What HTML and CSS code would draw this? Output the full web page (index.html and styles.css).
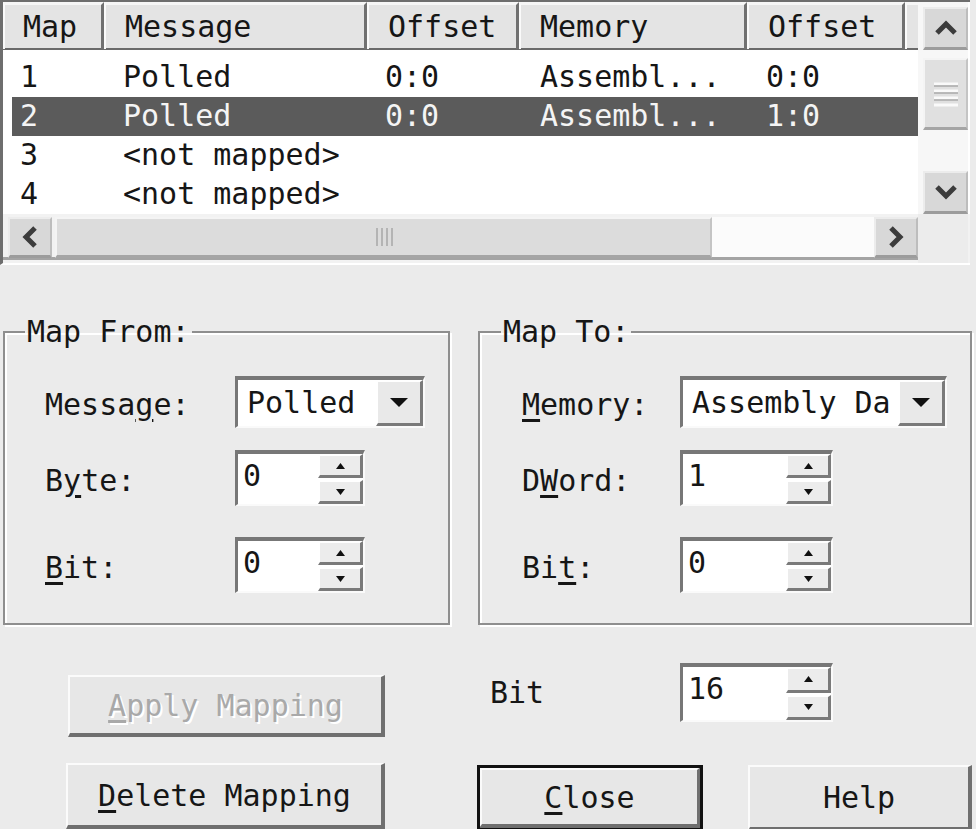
FILE: index.html
```
<!DOCTYPE html>
<html lang="en">
<head>
  <meta charset="UTF-8">
  <title>Map Assembly Data</title>
  <link rel="stylesheet" href="styles.css">
</head>
<body>
  <div class="listview">
    <div class="lv-top">
      <div class="lv-grid">
        <div class="lv-head">
          <div class="hcell c-map">Map</div>
          <div class="hcell">Message</div>
          <div class="hcell c-off">Offset</div>
          <div class="hcell c-mem">Memory</div>
          <div class="hcell">Offset</div>
          <div class="hcell c-fill"></div>
        </div>
        <div class="lv-rows">
          <div class="lv-row">
            <span class="c-map">1</span><span>Polled</span><span class="c-off">0:0</span><span class="c-mem">Assembl...</span><span>0:0</span>
          </div>
          <div class="lv-row selected">
            <span class="c-map">2</span><span>Polled</span><span class="c-off">0:0</span><span class="c-mem">Assembl...</span><span>1:0</span>
          </div>
          <div class="lv-row">
            <span class="c-map">3</span><span>&lt;not mapped&gt;</span><span></span><span></span><span></span>
          </div>
          <div class="lv-row">
            <span class="c-map">4</span><span>&lt;not mapped&gt;</span><span></span><span></span><span></span>
          </div>
        </div>
      </div>
      <div class="vscroll">
        <div class="sb-btn v-btn">
          <svg width="24" height="16" viewBox="0 0 24 16"><path d="M3 13 L12 4 L21 13" stroke="#3c3c3c" stroke-width="5" fill="none"/></svg>
        </div>
        <div class="sb-thumb v-thumb">
          <svg width="24" height="26" viewBox="0 0 24 26"><path d="M0 3 H24 M0 10 H24 M0 17 H24 M0 24 H24" stroke="#fafafa" stroke-width="3"/><path d="M0 5 H24 M0 12 H24 M0 19 H24" stroke="#a9a9a9" stroke-width="1.5"/></svg>
        </div>
        <div class="sb-track"></div>
        <div class="sb-btn v-btn">
          <svg width="24" height="16" viewBox="0 0 24 16"><path d="M3 3 L12 12 L21 3" stroke="#3c3c3c" stroke-width="5" fill="none"/></svg>
        </div>
      </div>
    </div>
    <div class="lv-bottom">
      <div class="hscroll">
        <div class="sb-btn h-btn">
          <svg width="16" height="24" viewBox="0 0 16 24"><path d="M13 3 L4 12 L13 21" stroke="#3c3c3c" stroke-width="5" fill="none"/></svg>
        </div>
        <div class="sb-thumb h-thumb">
          <svg width="18" height="18" viewBox="0 0 18 18"><path d="M2 0 V18 M7 0 V18 M12 0 V18 M17 0 V18" stroke="#b4b4b4" stroke-width="2"/></svg>
        </div>
        <div class="sb-track h-track"></div>
        <div class="sb-btn h-btn">
          <svg width="16" height="24" viewBox="0 0 16 24"><path d="M3 3 L12 12 L3 21" stroke="#3c3c3c" stroke-width="5" fill="none"/></svg>
        </div>
      </div>
      <div class="sb-corner"></div>
    </div>
  </div>

  <div class="groups">
    <fieldset class="group from">
      <legend>Map From:</legend>
      <div class="field">
        <label>Messa<u>g</u>e:</label>
        <div class="combo narrow">
          <span class="combo-val">Polled</span>
          <div class="combo-btn"><svg width="18" height="10" viewBox="0 0 18 10"><path d="M0 0 H18 L9 9 Z" fill="#111"/></svg></div>
        </div>
      </div>
      <div class="field gap1">
        <label>B<u>y</u>te:</label>
        <div class="spin short">
          <span class="spin-val">0</span>
          <div class="spin-btns">
            <div class="spin-b"><svg width="9" height="6" viewBox="0 0 9 6"><path d="M0 6 L4.5 0 L9 6 Z" fill="#111"/></svg></div>
            <div class="spin-b"><svg width="9" height="6" viewBox="0 0 9 6"><path d="M0 0 L4.5 6 L9 0 Z" fill="#111"/></svg></div>
          </div>
        </div>
      </div>
      <div class="field gap2">
        <label><u>B</u>it:</label>
        <div class="spin short">
          <span class="spin-val">0</span>
          <div class="spin-btns">
            <div class="spin-b"><svg width="9" height="6" viewBox="0 0 9 6"><path d="M0 6 L4.5 0 L9 6 Z" fill="#111"/></svg></div>
            <div class="spin-b"><svg width="9" height="6" viewBox="0 0 9 6"><path d="M0 0 L4.5 6 L9 0 Z" fill="#111"/></svg></div>
          </div>
        </div>
      </div>
    </fieldset>

    <fieldset class="group to">
      <legend>Map To:</legend>
      <div class="field">
        <label><u>M</u>emory:</label>
        <div class="combo wide">
          <span class="combo-val">Assembly Da</span>
          <div class="combo-btn"><svg width="18" height="10" viewBox="0 0 18 10"><path d="M0 0 H18 L9 9 Z" fill="#111"/></svg></div>
        </div>
      </div>
      <div class="field gap1">
        <label>D<u>W</u>ord:</label>
        <div class="spin">
          <span class="spin-val">1</span>
          <div class="spin-btns">
            <div class="spin-b"><svg width="9" height="6" viewBox="0 0 9 6"><path d="M0 6 L4.5 0 L9 6 Z" fill="#111"/></svg></div>
            <div class="spin-b"><svg width="9" height="6" viewBox="0 0 9 6"><path d="M0 0 L4.5 6 L9 0 Z" fill="#111"/></svg></div>
          </div>
        </div>
      </div>
      <div class="field gap2">
        <label>Bi<u>t</u>:</label>
        <div class="spin">
          <span class="spin-val">0</span>
          <div class="spin-btns">
            <div class="spin-b"><svg width="9" height="6" viewBox="0 0 9 6"><path d="M0 6 L4.5 0 L9 6 Z" fill="#111"/></svg></div>
            <div class="spin-b"><svg width="9" height="6" viewBox="0 0 9 6"><path d="M0 0 L4.5 6 L9 0 Z" fill="#111"/></svg></div>
          </div>
        </div>
      </div>
    </fieldset>
  </div>

  <div class="actions-top">
    <button class="btn apply" disabled><u>A</u>pply Mapping</button>
    <span class="bit-label">Bit</span>
    <div class="spin tall">
      <span class="spin-val">16</span>
      <div class="spin-btns">
        <div class="spin-b"><svg width="9" height="6" viewBox="0 0 9 6"><path d="M0 6 L4.5 0 L9 6 Z" fill="#111"/></svg></div>
        <div class="spin-b"><svg width="9" height="6" viewBox="0 0 9 6"><path d="M0 0 L4.5 6 L9 0 Z" fill="#111"/></svg></div>
      </div>
    </div>
  </div>

  <div class="actions-bottom">
    <button class="btn delete"><u>D</u>elete Mapping</button>
    <button class="btn close default"><u>C</u>lose</button>
    <button class="btn help">Help</button>
  </div>
</body>
</html>
```

FILE: styles.css
```
body {
  margin: 0;
  width: 976px;
  height: 829px;
  overflow: hidden;
  background-color: #ebebeb;
  font-family: "DejaVu Sans Mono", "Liberation Mono", monospace;
  font-size: 30px;
  color: #161616;
}
u {
  text-decoration-thickness: 3px;
  text-underline-offset: 4px;
}

/* list view */
.listview {
  width: 970px;
  border-left: 3px solid #6e6e6e;
  border-top: 2px solid #6e6e6e;
  border-bottom: 2px solid #fff;
  box-sizing: border-box;
  background-color: #fff;
}
.lv-top {
  display: flex;
  height: 212px;
}
.lv-grid {
  width: 915px;
}
.lv-head {
  display: grid;
  grid-template-columns: 101px 263px 152px 228px 158px 1fr;
  height: 46px;
  border-bottom: 2px solid #6a6a6a;
  background-color: #e4e4e4;
}
.hcell {
  padding-left: 19px;
  border-left: 2px solid #fafafa;
  border-right: 3px solid #707070;
  border-top: 3px solid #f6f6f6;
  box-sizing: border-box;
  line-height: 44px;
  white-space: nowrap;
}
.hcell.c-map {
  padding-left: 18px;
}
.hcell.c-fill {
  border-right: none;
}
.lv-rows {
  padding-top: 8px;
}
.lv-row {
  display: grid;
  grid-template-columns: 92px 263px 152px 228px 158px;
  margin-left: 9px;
  height: 39px;
  line-height: 37px;
  white-space: nowrap;
}
.lv-row span {
  padding-left: 19px;
}
.lv-row .c-map {
  padding-left: 8px;
}
.lv-row .c-mem {
  padding-left: 21px;
}
.lv-row .c-off {
  padding-left: 18px;
}
.lv-row.selected {
  background-color: #5b5b5b;
  color: #f4f4f4;
}

/* scrollbars */
.vscroll {
  width: 50px;
  padding: 5px 0 0 5px;
  box-sizing: border-box;
  display: flex;
  flex-direction: column;
  background-color: #f7f7f7;
}
.sb-btn {
  display: flex;
  align-items: center;
  justify-content: center;
  background-color: #d8d8d8;
  border-right: 2px solid #bdbdbd;
  border-bottom: 3px solid #9c9c9c;
  border-left: 2px solid #ececec;
  border-top: 2px solid #ececec;
  box-sizing: border-box;
}
.v-btn {
  height: 43px;
}
.v-thumb {
  height: 72px;
  margin-top: 8px;
}
.sb-thumb {
  display: flex;
  align-items: center;
  justify-content: center;
  background-color: #e0e0e0;
  border-right: 2px solid #c4c4c4;
  border-bottom: 3px solid #a5a5a5;
  border-left: 2px solid #f4f4f4;
  border-top: 2px solid #f4f4f4;
  box-sizing: border-box;
}
.sb-track {
  flex: 1;
}
.lv-bottom {
  display: flex;
  height: 49px;
  background-color: #f2f2f2;
}
.hscroll {
  width: 915px;
  display: flex;
  padding: 3px 0 0 5px;
  box-sizing: border-box;
  height: 46px;
  border-bottom: 3px solid #a4a4a4;
}
.h-btn {
  width: 44px;
  height: 41px;
}
.h-thumb {
  width: 657px;
  height: 41px;
  margin-left: 3px;
  background-color: #dcdcdc;
}
.h-track {
  background-color: #fbfbfb;
}
.sb-corner {
  width: 50px;
  background-color: #ececec;
}

/* group boxes */
.groups {
  display: flex;
  margin-top: 50px;
}
.group {
  margin: 0;
  padding: 27px 0 30px 40px;
  border: 2px solid #8e8e8e;
  box-shadow: 2px 2px 0 #fff, inset 2px 2px 0 #fff;
  min-width: 0;
}
.group legend {
  margin-left: -20px;
  padding: 0 2px;
  line-height: 34px;
}
.group.from {
  margin-left: 3px;
  width: 447px;
  box-sizing: border-box;
}
.group.to {
  margin-left: 28px;
  width: 494px;
  box-sizing: border-box;
  padding-left: 42px;
}
.group.to legend {
  margin-left: -21px;
}
.field {
  display: flex;
  align-items: center;
}
.field label {
  width: 190px;
  flex: none;
  padding-top: 4px;
}
.group.to .field label {
  width: 158px;
}
.field.gap1 {
  margin-top: 22px;
}
.field.gap2 {
  margin-top: 31px;
}

/* combo and spin boxes */
.combo, .spin {
  display: flex;
  background-color: #fff;
  border-top: 4px solid #777;
  border-left: 3px solid #777;
  border-right: 2px solid #fafafa;
  border-bottom: 2px solid #fafafa;
  box-sizing: border-box;
}
.combo {
  height: 52px;
}
.combo.narrow {
  width: 190px;
}
.combo.wide {
  width: 267px;
}
.combo-val {
  flex: 1;
  padding-left: 9px;
  line-height: 46px;
  white-space: nowrap;
  overflow: hidden;
}
.combo-btn {
  width: 47px;
  height: 46px;
  display: flex;
  align-items: center;
  justify-content: center;
  background-color: #e9e9e9;
  border-top: 2px solid #fff;
  border-left: 2px solid #fff;
  border-right: 3px solid #7a7a7a;
  border-bottom: 3px solid #7a7a7a;
  box-sizing: border-box;
}
.spin {
  height: 56px;
  width: 153px;
}
.spin.short {
  width: 130px;
}
.spin.tall {
  height: 59px;
}
.spin-val {
  flex: 1;
  padding-left: 5px;
  line-height: 44px;
}
.spin-btns {
  width: 45px;
  display: flex;
  flex-direction: column;
  gap: 2px;
}
.spin-b {
  flex: 1;
  display: flex;
  align-items: center;
  justify-content: center;
  background-color: #ececec;
  border-top: 2px solid #fff;
  border-left: 2px solid #fff;
  border-right: 3px solid #7a7a7a;
  border-bottom: 3px solid #7a7a7a;
}

/* buttons */
.actions-top {
  display: flex;
  align-items: flex-start;
  margin-top: 38px;
  padding-left: 68px;
}
.actions-bottom {
  display: flex;
  margin-top: 26px;
  padding-left: 66px;
}
.btn {
  font: inherit;
  color: #161616;
  background-color: #e7e7e7;
  border-top: 2px solid #fbfbfb;
  border-left: 2px solid #fbfbfb;
  border-right: 4px solid #6f6f6f;
  border-bottom: 4px solid #6f6f6f;
  padding: 0;
  box-sizing: border-box;
}
.btn.apply {
  width: 317px;
  height: 62px;
  margin-top: 12px;
  color: #a9a9a9;
  text-shadow: 2px 2px 0 #fff;
}
.bit-label {
  width: 190px;
  margin-left: 105px;
  line-height: 59px;
}
.btn.delete {
  width: 319px;
  height: 66px;
}
.btn.close {
  width: 226px;
  height: 66px;
  margin-left: 92px;
  margin-top: 2px;
}
.btn.default {
  outline: 3px solid #111;
  outline-offset: -3px;
  border-top-width: 5px;
  border-left-width: 5px;
  border-right-width: 6px;
  border-bottom-width: 7px;
  border-top-color: #fbfbfb;
}
.btn.help {
  width: 224px;
  height: 66px;
  margin-left: 45px;
  margin-top: 2px;
}
```
